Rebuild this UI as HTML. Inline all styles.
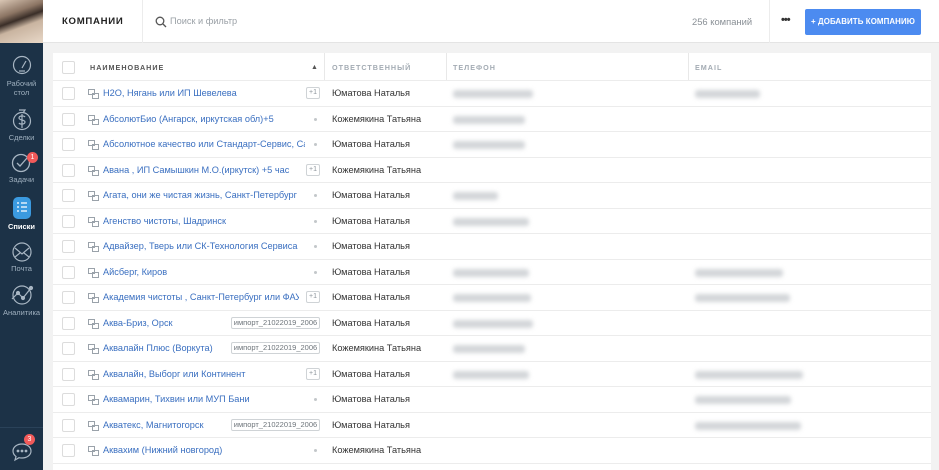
<!DOCTYPE html>
<html><head><meta charset="utf-8"><style>
*{margin:0;padding:0;box-sizing:border-box}
html,body{width:939px;height:470px;overflow:hidden}
body{background:#f2f2f2;font-family:"Liberation Sans","Noto Sans CJK SC",sans-serif;position:relative}
.side{position:absolute;left:0;top:0;width:43px;height:470px;background:#1c3247}
.photo{position:absolute;left:0;top:0;width:43px;height:43px;background:linear-gradient(160deg,#d9c6b4 0%,#8c7564 30%,#3a2e28 45%,#c9b4a0 60%,#e8d8c8 100%)}
.nav{position:absolute;left:0;width:43px;text-align:center;color:#9fb0bf;font-size:7.5px;line-height:9px}
.nav svg{display:block;margin:0 auto 2px}
.badge{position:absolute;width:11px;height:11px;border-radius:50%;background:#f15a5a;color:#fff;font-size:7px;line-height:11px;text-align:center}
.top{position:absolute;left:43px;top:0;right:0;height:43px;background:#fff;border-bottom:1px solid #e4e4e4}
.title{position:absolute;left:62px;top:16px;font-size:9.6px;font-weight:bold;letter-spacing:.7px;color:#222}
.vl{position:absolute;top:0;width:1px;height:43px;background:#ececec}
.search{position:absolute;left:170px;top:16px;font-size:9.2px;color:#9aa0a6}
.count{position:absolute;left:692px;top:16px;font-size:9.4px;color:#8a9096}
.dots{position:absolute;left:781px;top:14px;font-size:11px;font-weight:bold;color:#333;letter-spacing:-1px}
.btn{position:absolute;left:805px;top:9px;width:116px;height:26px;background:#4c8bf0;border-radius:2px;color:#fff;font-size:7.9px;font-weight:bold;line-height:26px;text-align:center;letter-spacing:.1px}
.tbl{position:absolute;left:53px;top:53px;width:878px;height:417px;background:#fff}
.hd{position:absolute;top:0;height:27px;font-size:7.2px;font-weight:bold;letter-spacing:1px;color:#a3abb3;line-height:29px}
.hsep{position:absolute;top:0;width:1px;height:27px;background:#e8e8e8}
.row{position:absolute;left:0;width:878px;height:25.5px;border-top:1px solid #ececec}
.cb{position:absolute;left:9px;top:6px;width:13px;height:13px;border:1px solid #dcdcdc;border-radius:2px;background:#fff}
.ic{position:absolute;left:35px;top:8px}
.nm{position:absolute;left:50px;top:7px;font-size:9.2px;color:#3a6fc0;white-space:nowrap;width:196px;overflow:hidden}
.plus{position:absolute;left:253px;top:6px;width:14px;height:12px;border:1px solid #cfd3d6;border-radius:2px;font-size:7px;color:#8d959c;text-align:center;line-height:10px}
.dot{position:absolute;left:261px;top:11px;width:3px;height:3px;border-radius:50%;background:#c3c7ca}
.imp{position:absolute;left:178px;top:6px;width:89px;height:12px;border:1px solid #cfd3d6;border-radius:2px;font-size:7.5px;color:#6d747a;text-align:center;line-height:10px}
.rs{position:absolute;left:279px;top:7px;font-size:9.2px;color:#333}
.bl{position:absolute;top:9px;height:8px;background:#d3d6d9;filter:blur(2px);border-radius:3px}
</style></head><body>
<div class="side">
 <div class="photo"></div>
 <div class="nav" style="top:55px"><svg width="20" height="22" viewBox="0 0 20 22" fill="none" stroke="#a8b6c3" stroke-width="1.2"><circle cx="10" cy="10" r="8.5"/><path d="M10 13l4-7"/><path d="M7 16h6"/></svg>Рабочий<br>стол</div>
 <div class="nav" style="top:107px"><svg width="20" height="24" viewBox="0 0 20 24" fill="none" stroke="#a8b6c3" stroke-width="1.2"><path d="M7 3h6l-2 3"/><circle cx="10" cy="14" r="8.5"/><path d="M13 10c-1-1.5-6-1.5-6 1s6 1.5 6 4-5 2.5-6 1M10 7v14"/></svg>Сделки</div>
 <div class="nav" style="top:153px"><svg width="22" height="20" viewBox="0 0 22 20" fill="none" stroke="#a8b6c3" stroke-width="1.3"><circle cx="10" cy="10" r="8.5"/><path d="M6 10l3 3 7-8"/></svg>Задачи</div>
 <div class="badge" style="left:27px;top:152px">1</div>
 <div class="nav" style="top:196px;color:#fff;font-weight:bold"><svg width="22" height="24" viewBox="0 0 22 24"><rect x="2" y="1" width="18" height="22" rx="5" fill="#3b9ae0"/><g stroke="#fff" stroke-width="1.2"><path d="M6 7h2M10 7h6M6 11h2M10 11h6M6 15h2M10 15h6"/></g></svg>Списки</div>
 <div class="nav" style="top:242px"><svg width="22" height="20" viewBox="0 0 22 20" fill="none" stroke="#a8b6c3" stroke-width="1.2"><circle cx="11" cy="10" r="9"/><path d="M4 6l7 6 7-6M4 15l5-4M18 15l-5-4"/></svg>Почта</div>
 <div class="nav" style="top:284px"><svg width="24" height="22" viewBox="0 0 24 22" fill="none" stroke="#a8b6c3" stroke-width="1.2"><circle cx="12" cy="11" r="9"/><path d="M2 15l6-6 5 5 8-10"/><circle cx="8" cy="9" r="1.5" fill="#a8b6c3"/><circle cx="13" cy="14" r="1.5" fill="#a8b6c3"/><circle cx="21" cy="4" r="1.5" fill="#a8b6c3"/></svg>Аналитика</div>
 <div style="position:absolute;left:0;top:427px;width:43px;height:1px;background:#2a4259"></div>
 <svg style="position:absolute;left:11px;top:442px" width="22" height="20" viewBox="0 0 22 20" fill="none" stroke="#a8b6c3" stroke-width="1.2"><path d="M11 2c5 0 9 3 9 7s-4 7-9 7c-1 0-2 0-3-.3L4 18l1-3.5C3 13 2 11 2 9c0-4 4-7 9-7z"/><circle cx="7" cy="9" r=".8" fill="#a8b6c3"/><circle cx="11" cy="9" r=".8" fill="#a8b6c3"/><circle cx="15" cy="9" r=".8" fill="#a8b6c3"/></svg>
 <div class="badge" style="left:24px;top:434px">3</div>
</div>
<div class="top"></div>
<div class="title">КОМПАНИИ</div>
<div class="vl" style="left:142px"></div>
<svg style="position:absolute;left:155px;top:16px" width="12" height="12" viewBox="0 0 12 12" fill="none" stroke="#555" stroke-width="1.3"><circle cx="5" cy="5" r="3.8"/><path d="M8 8l3 3"/></svg>
<div class="search">Поиск и фильтр</div>
<div class="count">256 компаний</div>
<div class="vl" style="left:769px"></div>
<div class="dots">•••</div>
<div class="btn">+ ДОБАВИТЬ КОМПАНИЮ</div>
<div class="tbl">
 <div class="cb" style="top:8px"></div>
 <div class="hd" style="left:37px;color:#555">НАИМЕНОВАНИЕ</div>
 <div class="hd" style="left:258px;color:#555;font-size:7px">▲</div>
 <div class="hsep" style="left:271px"></div>
 <div class="hd" style="left:279px">ОТВЕТСТВЕННЫЙ</div>
 <div class="hsep" style="left:393px"></div>
 <div class="hd" style="left:400px">ТЕЛЕФОН</div>
 <div class="hsep" style="left:635px"></div>
 <div class="hd" style="left:642px">EMAIL</div>
</div>
<div class="tbl" style="background:none">
<div class="row" style="top:27px"><div class="cb"></div><svg class="ic" width="11" height="10" viewBox="0 0 11 10" fill="none" stroke="#9aa2aa"><rect x=".5" y=".5" width="6" height="5"/><rect x="4.5" y="4.5" width="6" height="5"/></svg><div class="nm">H2O, Нягань или ИП Шевелева</div><div class="plus">+1</div><div class="rs">Юматова Наталья</div><div class="bl" style="left:400px;width:80px"></div><div class="bl" style="left:642px;width:65px"></div></div>
<div class="row" style="top:52.5px"><div class="cb"></div><svg class="ic" width="11" height="10" viewBox="0 0 11 10" fill="none" stroke="#9aa2aa"><rect x=".5" y=".5" width="6" height="5"/><rect x="4.5" y="4.5" width="6" height="5"/></svg><div class="nm">АбсолютБио (Ангарск, иркутская обл)+5</div><div class="dot"></div><div class="rs">Кожемякина Татьяна</div><div class="bl" style="left:400px;width:72px"></div></div>
<div class="row" style="top:78px"><div class="cb"></div><svg class="ic" width="11" height="10" viewBox="0 0 11 10" fill="none" stroke="#9aa2aa"><rect x=".5" y=".5" width="6" height="5"/><rect x="4.5" y="4.5" width="6" height="5"/></svg><div class="nm" style="width:202px">Абсолютное качество или Стандарт-Сервис, Санкт</div><div class="dot"></div><div class="rs">Юматова Наталья</div><div class="bl" style="left:400px;width:72px"></div></div>
<div class="row" style="top:103.5px"><div class="cb"></div><svg class="ic" width="11" height="10" viewBox="0 0 11 10" fill="none" stroke="#9aa2aa"><rect x=".5" y=".5" width="6" height="5"/><rect x="4.5" y="4.5" width="6" height="5"/></svg><div class="nm">Авана , ИП Самышкин М.О.(иркутск) +5 час</div><div class="plus">+1</div><div class="rs">Кожемякина Татьяна</div></div>
<div class="row" style="top:129px"><div class="cb"></div><svg class="ic" width="11" height="10" viewBox="0 0 11 10" fill="none" stroke="#9aa2aa"><rect x=".5" y=".5" width="6" height="5"/><rect x="4.5" y="4.5" width="6" height="5"/></svg><div class="nm">Агата, они же чистая жизнь, Санкт-Петербург</div><div class="dot"></div><div class="rs">Юматова Наталья</div><div class="bl" style="left:400px;width:45px"></div></div>
<div class="row" style="top:154.5px"><div class="cb"></div><svg class="ic" width="11" height="10" viewBox="0 0 11 10" fill="none" stroke="#9aa2aa"><rect x=".5" y=".5" width="6" height="5"/><rect x="4.5" y="4.5" width="6" height="5"/></svg><div class="nm">Агенство чистоты, Шадринск</div><div class="dot"></div><div class="rs">Юматова Наталья</div><div class="bl" style="left:400px;width:76px"></div></div>
<div class="row" style="top:180px"><div class="cb"></div><svg class="ic" width="11" height="10" viewBox="0 0 11 10" fill="none" stroke="#9aa2aa"><rect x=".5" y=".5" width="6" height="5"/><rect x="4.5" y="4.5" width="6" height="5"/></svg><div class="nm">Адвайзер, Тверь или СК-Технология Сервиса</div><div class="dot"></div><div class="rs">Юматова Наталья</div></div>
<div class="row" style="top:205.5px"><div class="cb"></div><svg class="ic" width="11" height="10" viewBox="0 0 11 10" fill="none" stroke="#9aa2aa"><rect x=".5" y=".5" width="6" height="5"/><rect x="4.5" y="4.5" width="6" height="5"/></svg><div class="nm">Айсберг, Киров</div><div class="dot"></div><div class="rs">Юматова Наталья</div><div class="bl" style="left:400px;width:76px"></div><div class="bl" style="left:642px;width:88px"></div></div>
<div class="row" style="top:231px"><div class="cb"></div><svg class="ic" width="11" height="10" viewBox="0 0 11 10" fill="none" stroke="#9aa2aa"><rect x=".5" y=".5" width="6" height="5"/><rect x="4.5" y="4.5" width="6" height="5"/></svg><div class="nm">Академия чистоты , Санкт-Петербург или ФАУ</div><div class="plus">+1</div><div class="rs">Юматова Наталья</div><div class="bl" style="left:400px;width:78px"></div><div class="bl" style="left:642px;width:95px"></div></div>
<div class="row" style="top:256.5px"><div class="cb"></div><svg class="ic" width="11" height="10" viewBox="0 0 11 10" fill="none" stroke="#9aa2aa"><rect x=".5" y=".5" width="6" height="5"/><rect x="4.5" y="4.5" width="6" height="5"/></svg><div class="nm">Аква-Бриз, Орск</div><div class="imp">импорт_21022019_2006</div><div class="rs">Юматова Наталья</div><div class="bl" style="left:400px;width:80px"></div></div>
<div class="row" style="top:282px"><div class="cb"></div><svg class="ic" width="11" height="10" viewBox="0 0 11 10" fill="none" stroke="#9aa2aa"><rect x=".5" y=".5" width="6" height="5"/><rect x="4.5" y="4.5" width="6" height="5"/></svg><div class="nm">Аквалайн Плюс (Воркута)</div><div class="imp">импорт_21022019_2006</div><div class="rs">Кожемякина Татьяна</div><div class="bl" style="left:400px;width:72px"></div></div>
<div class="row" style="top:307.5px"><div class="cb"></div><svg class="ic" width="11" height="10" viewBox="0 0 11 10" fill="none" stroke="#9aa2aa"><rect x=".5" y=".5" width="6" height="5"/><rect x="4.5" y="4.5" width="6" height="5"/></svg><div class="nm">Аквалайн, Выборг или Континент</div><div class="plus">+1</div><div class="rs">Юматова Наталья</div><div class="bl" style="left:400px;width:76px"></div><div class="bl" style="left:642px;width:108px"></div></div>
<div class="row" style="top:333px"><div class="cb"></div><svg class="ic" width="11" height="10" viewBox="0 0 11 10" fill="none" stroke="#9aa2aa"><rect x=".5" y=".5" width="6" height="5"/><rect x="4.5" y="4.5" width="6" height="5"/></svg><div class="nm">Аквамарин, Тихвин или МУП Бани</div><div class="dot"></div><div class="rs">Юматова Наталья</div><div class="bl" style="left:642px;width:96px"></div></div>
<div class="row" style="top:358.5px"><div class="cb"></div><svg class="ic" width="11" height="10" viewBox="0 0 11 10" fill="none" stroke="#9aa2aa"><rect x=".5" y=".5" width="6" height="5"/><rect x="4.5" y="4.5" width="6" height="5"/></svg><div class="nm">Акватекс, Магнитогорск</div><div class="imp">импорт_21022019_2006</div><div class="rs">Юматова Наталья</div><div class="bl" style="left:642px;width:106px"></div></div>
<div class="row" style="top:384px"><div class="cb"></div><svg class="ic" width="11" height="10" viewBox="0 0 11 10" fill="none" stroke="#9aa2aa"><rect x=".5" y=".5" width="6" height="5"/><rect x="4.5" y="4.5" width="6" height="5"/></svg><div class="nm">Аквахим (Нижний новгород)</div><div class="dot"></div><div class="rs">Кожемякина Татьяна</div></div>
<div class="row" style="top:409.5px"></div>
</div>
</body></html>
